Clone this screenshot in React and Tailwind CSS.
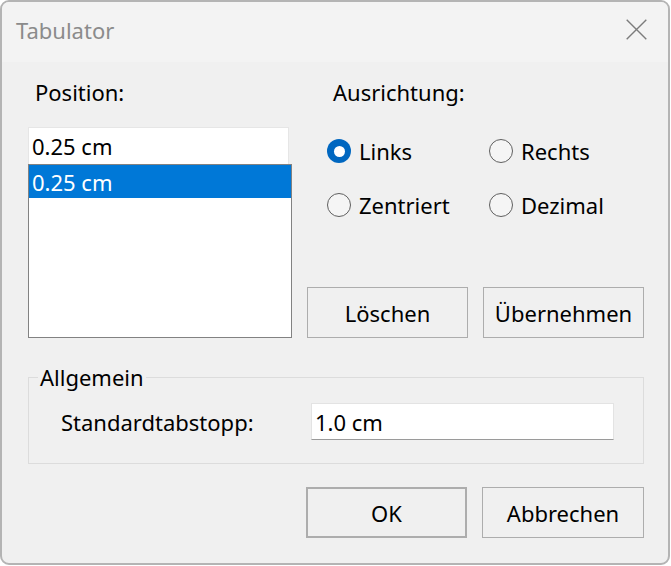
import React from "react";

function Radio({ checked, label }) {
  return (
    <div className="flex h-[40px] items-center gap-[8px]">
      {checked ? (
        <div className="flex h-[24px] w-[24px] items-center justify-center rounded-full bg-[#0067c0]">
          <div className="h-[11px] w-[11px] rounded-full bg-white" />
        </div>
      ) : (
        <div className="h-[24px] w-[24px] rounded-full border-[1.5px] border-[#5f5f5f] bg-[#f5f5f5]" />
      )}
      <span>{label}</span>
    </div>
  );
}

function Button({ children, primary, w }) {
  return (
    <div
      className={`flex h-[51px] items-center justify-center bg-[#f0f0f0] ${
        primary ? "border-2 border-[#adadad]" : "border border-[#adadad]"
      } ${w}`}
    >
      {children}
    </div>
  );
}

export default function App() {
  return (
    <div
      className="h-[566px] w-[671px] bg-white text-[22px] leading-[30px] text-black"
      style={{ fontFamily: '"Noto Sans", "Open Sans", sans-serif' }}
    >
      <div className="flex h-[565px] w-[670px] flex-col overflow-hidden rounded-[9px] border-2 border-[#b4b4b4] bg-[#f0f0f0]">
        {/* Title bar */}
        <div className="flex h-[60px] shrink-0 items-center justify-between bg-[#f3f3f3] pb-[5px] pl-[14px] pr-[21px]">
          <span className="text-[#8b8b8b]">Tabulator</span>
          <svg width="21" height="21" viewBox="0 0 21 21">
            <path d="M0.7 0.7 L20.3 20.3 M20.3 0.7 L0.7 20.3" stroke="#7c7c7c" strokeWidth="1.4" fill="none" />
          </svg>
        </div>

        {/* Body */}
        <div className="flex flex-col pl-[26px] pr-[24px] pt-[15px]">
          <div className="flex gap-[15px]">
            {/* Left column */}
            <div className="flex w-[264px] flex-col">
              <div className="ml-[7px]">Position:</div>
              <div className="mt-[20px] flex h-[37px] w-[261px] items-center border border-b-0 border-[#e6e6e6] bg-white pl-[3px]">
                0.25 cm
              </div>
              <div className="h-[174px] w-[264px] border border-[#828282] bg-white">
                <div className="flex h-[33px] items-center bg-[#0078d7] pl-[3px] text-white">0.25 cm</div>
              </div>
            </div>

            {/* Right column */}
            <div className="flex flex-1 flex-col">
              <div className="ml-[26px]">Ausrichtung:</div>
              <div className="ml-[20px] mt-[24px] grid grid-cols-[162px_1fr] gap-y-[14px]">
                <Radio checked label="Links" />
                <Radio label="Rechts" />
                <Radio label="Zentriert" />
                <Radio label="Dezimal" />
              </div>
              <div className="mt-auto flex gap-[15px]">
                <Button w="w-[161px] h-[50px]">Löschen</Button>
                <Button w="w-[161px] h-[50px]">Übernehmen</Button>
              </div>
            </div>
          </div>

          {/* Group box */}
          <fieldset className="mt-[27px] border border-[#dcdcdc] pb-[23px] pl-[9px] pt-[14px]">
            <legend className="px-[2px] leading-[24px]">Allgemein</legend>
            <div className="ml-[23px] flex items-center">
              <span className="w-[250px]">Standardtabstopp:</span>
              <div className="flex h-[37px] w-[303px] items-center border border-[#e3e3e3] border-b-[#9a9a9a] bg-white pl-[3px]">
                1.0 cm
              </div>
            </div>
          </fieldset>

          {/* Bottom buttons */}
          <div className="mt-[23px] flex justify-end gap-[15px]">
            <Button primary w="w-[161px]">OK</Button>
            <Button w="w-[162px]">Abbrechen</Button>
          </div>
        </div>
      </div>
    </div>
  );
}
